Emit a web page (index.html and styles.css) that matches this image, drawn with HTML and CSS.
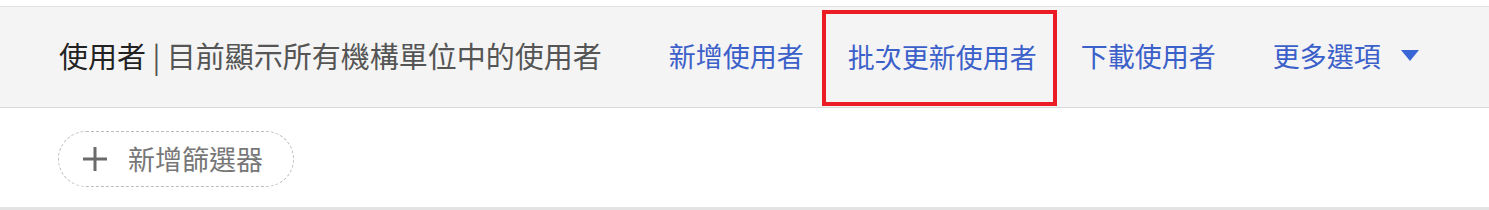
FILE: index.html
```html
<!DOCTYPE html>
<html lang="zh-Hant">
<head>
  <meta charset="UTF-8" />
  <meta name="viewport" content="width=device-width, initial-scale=1.0" />
  <title>使用者</title>
  <link rel="stylesheet" href="styles.css">
</head>
<body>

  <!-- Page header -->
  <div class="page-header">
    <h1 class="title">使用者 <span class="subtitle">| 目前顯示所有機構單位中的使用者</span></h1>

    <nav class="actions">
      <a href="#" class="action">新增使用者</a>
      <a href="#" class="action highlight">批次更新使用者</a>
      <a href="#" class="action">下載使用者</a>
      <a href="#" class="action more">更多選項
        <svg class="caret" width="18" height="12" viewBox="0 0 18 12"><path d="M0 0 H18 L9 11 Z" fill="#3a67d6"/></svg>
      </a>
    </nav>
  </div>

  <!-- Filters -->
  <div class="filter-bar">
    <button class="add-filter">
      <svg class="plus" width="24" height="24" viewBox="0 0 24 24"><path d="M12 0 V24 M0 12 H24" stroke="#6b6b6b" stroke-width="3"/></svg>
      <span>新增篩選器</span>
    </button>
  </div>

</body>
</html>
```

FILE: styles.css
```css
body {
  margin: 0;
  padding: 0;
  background-color: #ffffff;
  font-family: "Noto Sans CJK TC", "Noto Sans", sans-serif;
}

.page-header {
  margin-top: 6px;
  height: 100px;
  border-top: 1px solid #e2e2e2;
  border-bottom: 1px solid #dadada;
  background-color: #f4f4f4;
  display: flex;
  align-items: center;
  padding-left: 59px;
}

.title {
  margin: 0 0 4px;
  font-size: 29px;
  line-height: 1;
  font-weight: normal;
  color: #222;
  white-space: nowrap;
}

.subtitle {
  color: #555;
}

.actions {
  display: flex;
  align-self: stretch;
  align-items: center;
  margin-left: 67px;
}

.action {
  font-size: 27px;
  line-height: 1;
  color: #3b60c9;
  text-decoration: none;
  white-space: nowrap;
  margin-bottom: 4px;
}

.action.highlight {
  align-self: stretch;
  margin: 3px 24px 1px 18px;
  padding: 0 16px 4px 22px;
  border: 4px solid #ec1c24;
  display: flex;
  align-items: center;
}

.action.more {
  margin-left: 57px;
  display: flex;
  align-items: center;
}

.caret {
  margin-left: 20px;
  margin-top: 2px;
}

.filter-bar {
  box-sizing: border-box;
  height: 102px;
  border-bottom: 3px solid #e3e3e3;
  display: flex;
  align-items: center;
  padding-left: 58px;
  padding-top: 2px;
}

.add-filter {
  height: 56px;
  padding: 0 30px 0 24px;
  border: 1px dashed #bdbdbd;
  border-radius: 28px;
  background-color: #fff;
  display: flex;
  align-items: center;
  gap: 21px;
  font-family: inherit;
  font-size: 27px;
  color: #777;
  cursor: pointer;
}
```
